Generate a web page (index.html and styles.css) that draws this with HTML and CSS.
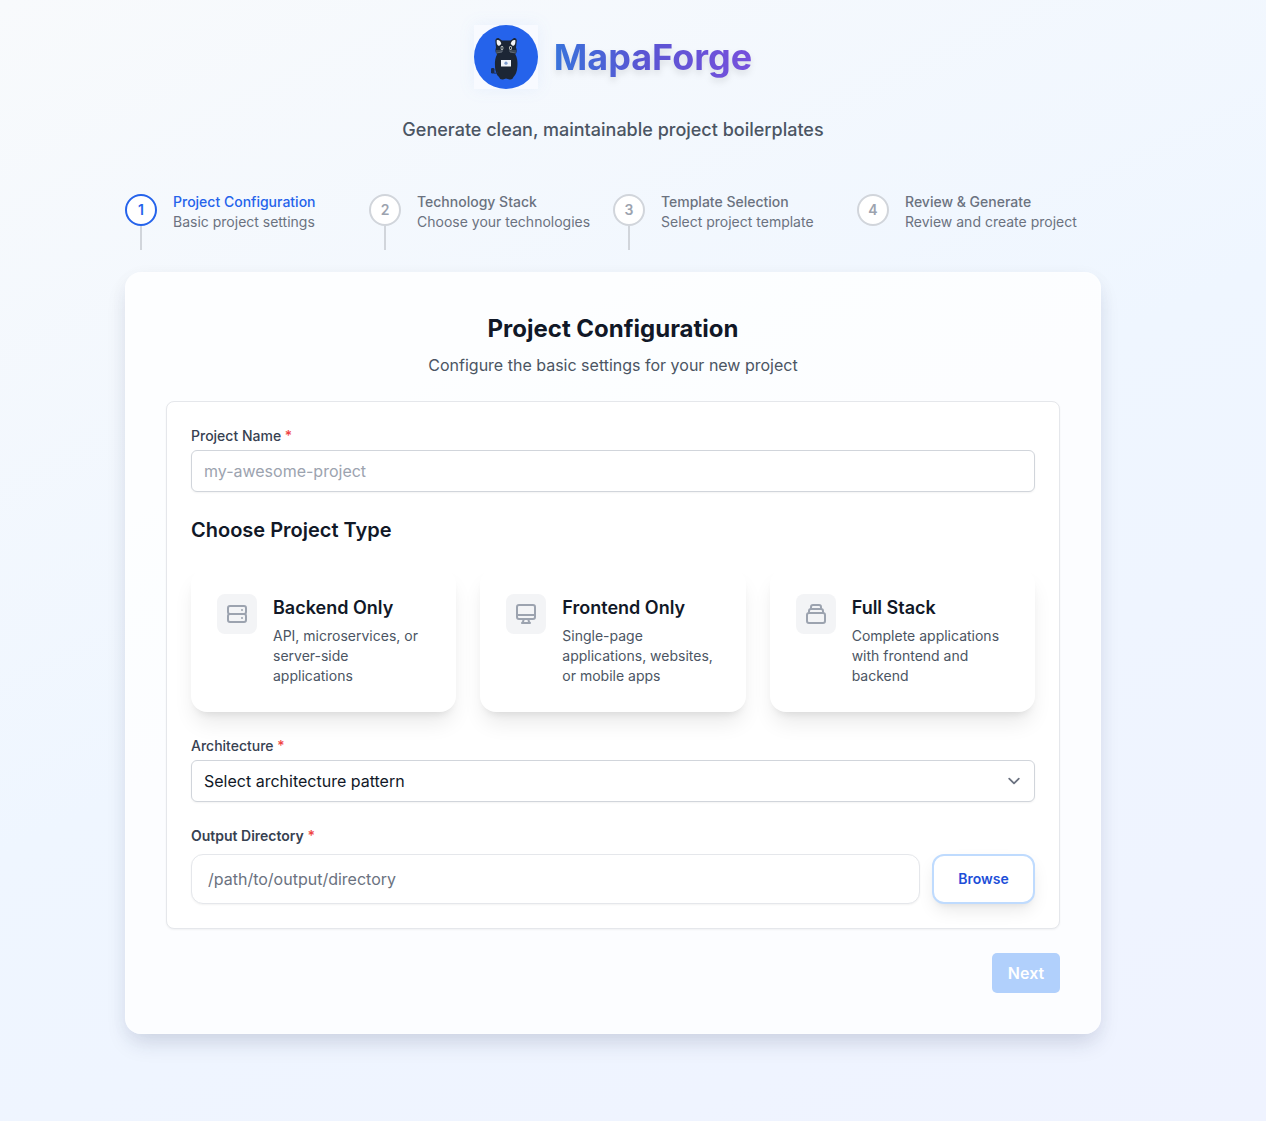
FILE: index.html
```html
<!DOCTYPE html>
<html lang="en">
<head>
<meta charset="utf-8">
<title>MapaForge</title>
<link rel="stylesheet" href="styles.css">
</head>
<body>
<div class="page">
  <header class="header">
    <div class="brand">
      <div class="logo">
        <svg viewBox="0 0 64 64" width="64" height="64">
          <rect width="64" height="64" fill="#f8faff"/>
          <circle cx="32" cy="32" r="32" fill="#2563eb"/>
          <path d="M21 42C20.500 36 21.500 32 23 29.500C21 27.500 21.300 24.500 22 22.500L21.300 15.500Q21.500 12.500 24.500 13L28 15.500H36.500L40 13Q42.700 12.500 42.800 15.500L42 22.500C43 25 43 27.500 41.300 29.500C43 32 44 37 43.300 42C43 47 41.500 50 39.500 52Q38.500 55 35.500 54.500L32 53.500L29 54.500Q26 55 25 52C22.500 50 21.200 46 21 42Z" fill="#1c2635"/>
          <path d="M24 47Q19.500 50 19 46" fill="none" stroke="#1c2f5a" stroke-width="1"/>
          <rect x="17" y="43" width="3.500" height="5.500" rx="1.300" fill="#1b2b4d"/>
          <path d="M22.800 15Q26.500 14.500 27.300 19L25 21Q22 20 22.800 15ZM41.300 15Q37.500 14.500 36.700 19L39 21Q42 20 41.300 15Z" fill="#f3f4f6"/>
          <path d="M22 26H29M22 28L28 27M35 26H42M36 27L42 28" stroke="#aab4bf" stroke-width=".5"/>
          <ellipse cx="28" cy="23" rx="1.400" ry="2" fill="#dfe6dc"/><ellipse cx="36.500" cy="23" rx="1.400" ry="2" fill="#dfe6dc"/>
          <ellipse cx="28" cy="23" rx=".7" ry="1.200" fill="#1c2635"/><ellipse cx="36.500" cy="23" rx=".7" ry="1.200" fill="#1c2635"/>
          <rect x="27" y="35" width="10" height="6.500" fill="#f1f5fb"/>
          <circle cx="32" cy="38.200" r="1.600" fill="#7d9cce"/>
        </svg>
      </div>
      <h1 class="brand-name">MapaForge</h1>
    </div>
    <p class="tagline">Generate clean, maintainable project boilerplates</p>
  </header>

  <ol class="steps">
    <li class="step active"><div class="marker"><span class="num">1</span><i class="stem"></i></div><div><div class="step-title">Project Configuration</div><div class="step-note">Basic project settings</div></div></li>
    <li class="step"><div class="marker"><span class="num">2</span><i class="stem"></i></div><div><div class="step-title">Technology Stack</div><div class="step-note">Choose your technologies</div></div></li>
    <li class="step"><div class="marker"><span class="num">3</span><i class="stem"></i></div><div><div class="step-title">Template Selection</div><div class="step-note">Select project template</div></div></li>
    <li class="step"><div class="marker"><span class="num">4</span></div><div><div class="step-title">Review &amp; Generate</div><div class="step-note">Review and create project</div></div></li>
  </ol>

  <main class="panel">
    <h2 class="panel-title">Project Configuration</h2>
    <p class="panel-note">Configure the basic settings for your new project</p>
    <form class="form">
      <label class="label" for="name">Project Name <b>*</b></label>
      <input class="input" id="name" type="text" placeholder="my-awesome-project">

      <h3 class="type-title">Choose Project Type</h3>
      <div class="types">
        <div class="type">
          <div class="type-icon"><svg viewBox="0 0 24 24"><path d="M5 12h14M5 12a2 2 0 01-2-2V6a2 2 0 012-2h14a2 2 0 012 2v4a2 2 0 01-2 2M5 12a2 2 0 00-2 2v4a2 2 0 002 2h14a2 2 0 002-2v-4a2 2 0 00-2-2m-2-4h.01M17 16h.01"/></svg></div>
          <div><h4>Backend Only</h4><p>API, microservices, or server-side applications</p></div>
        </div>
        <div class="type">
          <div class="type-icon"><svg viewBox="0 0 24 24"><path d="M9.750 17L9 20l-1 1h8l-1-1-.75-3M3 13h18M5 17h14a2 2 0 002-2V5a2 2 0 00-2-2H5a2 2 0 00-2 2v10a2 2 0 002 2z"/></svg></div>
          <div><h4>Frontend Only</h4><p>Single-page applications, websites, or mobile apps</p></div>
        </div>
        <div class="type">
          <div class="type-icon"><svg viewBox="0 0 24 24"><path d="M19 11H5m14 0a2 2 0 012 2v6a2 2 0 01-2 2H5a2 2 0 01-2-2v-6a2 2 0 012-2m14 0V9a2 2 0 00-2-2M5 11V9a2 2 0 012-2m0 0V5a2 2 0 012-2h6a2 2 0 012 2v2M7 7h10"/></svg></div>
          <div><h4>Full Stack</h4><p>Complete applications with frontend and backend</p></div>
        </div>
      </div>

      <div class="label">Architecture <b>*</b></div>
      <div class="input select"><span>Select architecture pattern</span><svg viewBox="0 0 20 20"><path d="M6 8l4 4 4-4"/></svg></div>

      <label class="label label-out" for="out">Output Directory <b>*</b></label>
      <div class="output">
        <input class="path" id="out" type="text" placeholder="/path/to/output/directory">
        <button class="browse" type="button">Browse</button>
      </div>
    </form>
    <div class="actions"><button class="next" type="button">Next</button></div>
  </main>
</div>
</body>
</html>
```
FILE: styles.css
```css
* { box-sizing: border-box; margin: 0; padding: 0; }
body {
  min-height: 1121px;
  font-family: Inter, "Liberation Sans", sans-serif;
  font-size: 16px;
  line-height: 24px;
  color: #111827;
  background: linear-gradient(155deg, #f8fafc 0%, #eff6ff 50%, #eff3ff 100%);
}
input, button { font: inherit; }
.page { width: 976px; margin-left: 125px; padding-top: 25px; }

.header { text-align: center; }
.brand { display: flex; align-items: center; justify-content: center; gap: 16px; height: 64px; }
.logo { height: 64px; filter: drop-shadow(0 0 8px rgba(59, 130, 246, .08)); }
.logo svg { display: block; }
.brand-name {
  font-size: 36px;
  line-height: 45px;
  font-weight: 700;
  color: transparent;
  background: linear-gradient(90deg, #3973db, #5a55d3 45%, #7650dc);
  -webkit-background-clip: text;
  background-clip: text;
  filter: drop-shadow(0 4px 3px rgba(0, 0, 0, .1));
}
.tagline { margin-top: 27px; font-size: 18px; line-height: 28px; font-weight: 500; color: #4b5563; }

.steps { display: grid; grid-template-columns: repeat(4, 244px); list-style: none; margin-top: 48px; height: 58px; }
.step { display: flex; gap: 16px; font-size: 14px; line-height: 20px; color: #6b7280; white-space: nowrap; }
.marker { display: flex; flex-direction: column; align-items: center; padding-top: 2px; }
.num {
  width: 32px; height: 32px; border: 2px solid #d1d5db; border-radius: 50%;
  background: #fff; color: #9ca3af; font-weight: 600; text-align: center; line-height: 28px;
}
.stem { width: 2px; height: 24px; background: #d1d5db; }
.step-title { font-weight: 500; }
.active .num { border-color: #2563eb; color: #2563eb; }
.active .step-title { color: #2563eb; }

.panel {
  margin-top: 22px; padding: 40px; border: 1px solid rgba(255, 255, 255, .2); border-radius: 16px;
  background: rgba(255, 255, 255, .8);
  box-shadow: 0 12px 22px -4px rgba(30, 41, 80, .15), 0 4px 20px rgba(30, 41, 90, .03);
}
.panel-title { font-size: 24px; line-height: 32px; font-weight: 700; text-align: center; }
.panel-note { margin-top: 8px; text-align: center; color: #4b5563; }
.form {
  margin-top: 24px; padding: 24px; border: 1px solid #e5e7eb; border-radius: 8px;
  background: #fff; box-shadow: 0 1px 2px rgba(0, 0, 0, .05);
}
.label { display: block; font-size: 14px; line-height: 20px; font-weight: 500; color: #374151; }
.label b { font-weight: inherit; color: #ef4444; }
.input {
  display: block; width: 100%; height: 42px; margin-top: 4px; padding: 0 12px;
  border: 1px solid #d1d5db; border-radius: 6px; background: #fff; color: #111827;
  box-shadow: 0 1px 2px rgba(0, 0, 0, .05);
}
input::placeholder { color: #9ca3af; opacity: 1; }
.type-title { margin-top: 24px; font-size: 20px; line-height: 28px; font-weight: 600; }
.types { display: grid; grid-template-columns: repeat(3, 1fr); gap: 24px; margin: 24px 0; }
.type {
  display: flex; gap: 16px; height: 144px; padding: 26px; border-radius: 16px; background: #fff;
  box-shadow: 0 14px 22px -4px rgba(0, 0, 0, .09), 0 6px 8px -5px rgba(0, 0, 0, .1);
}
.type-icon { flex: none; width: 40px; height: 40px; padding: 8px; border-radius: 8px; background: #f3f4f6; }
.type-icon svg { display: block; fill: none; stroke: #9ca3af; stroke-width: 2; stroke-linecap: round; stroke-linejoin: round; }
.type h4 { font-size: 18px; line-height: 28px; font-weight: 600; }
.type p { margin-top: 4px; font-size: 14px; line-height: 20px; color: #4b5563; }
.select { display: flex; align-items: center; justify-content: space-between; padding-right: 8px; }
.select svg { width: 24px; height: 24px; fill: none; stroke: #6b7280; stroke-width: 1.5; stroke-linecap: round; stroke-linejoin: round; }
.label-out { margin-top: 24px; font-weight: 600; }
.output { display: flex; gap: 12px; margin-top: 8px; height: 50px; }
.path {
  flex: 1; min-width: 0; padding: 0 16px; border: 1px solid #e5e7eb; border-radius: 12px;
  background: #fff; box-shadow: 0 1px 2px rgba(0, 0, 0, .05);
}
.path::placeholder { color: #6b7280; }
.browse {
  width: 103px; border: 2px solid #bfdbfe; border-radius: 12px; background: #fff;
  color: #1d4ed8; font-size: 14px; font-weight: 600;
  box-shadow: 0 8px 18px -3px rgba(0, 0, 0, .1), 0 4px 6px -4px rgba(0, 0, 0, .08);
}
.actions { display: flex; justify-content: flex-end; margin-top: 24px; }
.next { width: 68px; height: 40px; border: 0; border-radius: 5px; background: #b1d0fc; color: #fff; font-weight: 600; }
```
